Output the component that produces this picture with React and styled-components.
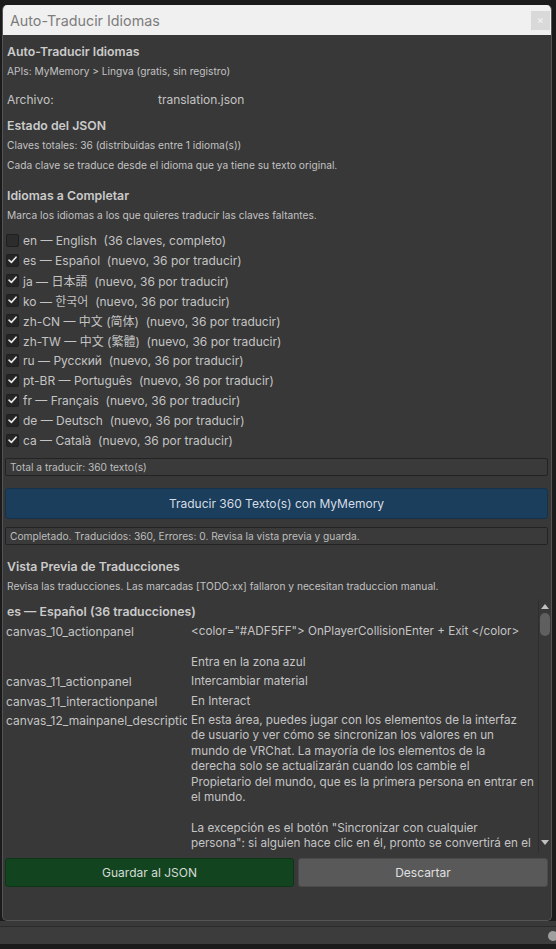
import React from 'react';
import styled, { createGlobalStyle } from 'styled-components';

const GlobalStyle = createGlobalStyle`
  html, body {
    margin: 0;
    padding: 0;
    background: #1b1b1b;
  }
  * {
    box-sizing: border-box;
  }
`;

const languages = [
  { code: 'en', name: 'English', note: '(36 claves, completo)', checked: false },
  { code: 'es', name: 'Español', note: '(nuevo, 36 por traducir)', checked: true },
  { code: 'ja', name: '日本語', note: '(nuevo, 36 por traducir)', checked: true },
  { code: 'ko', name: '한국어', note: '(nuevo, 36 por traducir)', checked: true },
  { code: 'zh-CN', name: '中文 (简体)', note: '(nuevo, 36 por traducir)', checked: true },
  { code: 'zh-TW', name: '中文 (繁體)', note: '(nuevo, 36 por traducir)', checked: true },
  { code: 'ru', name: 'Русский', note: '(nuevo, 36 por traducir)', checked: true },
  { code: 'pt-BR', name: 'Português', note: '(nuevo, 36 por traducir)', checked: true },
  { code: 'fr', name: 'Français', note: '(nuevo, 36 por traducir)', checked: true },
  { code: 'de', name: 'Deutsch', note: '(nuevo, 36 por traducir)', checked: true },
  { code: 'ca', name: 'Català', note: '(nuevo, 36 por traducir)', checked: true },
];

// empty string = blank line inside a translated value
const previewRows = [
  {
    key: 'canvas_10_actionpanel',
    lines: ['<color="#ADF5FF"> OnPlayerCollisionEnter + Exit </color>', '', 'Entra en la zona azul'],
  },
  { key: 'canvas_11_actionpanel', lines: ['Intercambiar material'] },
  { key: 'canvas_11_interactionpanel', lines: ['En Interact'] },
  {
    key: 'canvas_12_mainpanel_description',
    lines: [
      'En esta área, puedes jugar con los elementos de la interfaz',
      'de usuario y ver cómo se sincronizan los valores en un',
      'mundo de VRChat. La mayoría de los elementos de la',
      'derecha solo se actualizarán cuando los cambie el',
      'Propietario del mundo, que es la primera persona en entrar en',
      'el mundo.',
      '',
      'La excepción es el botón "Sincronizar con cualquier',
      'persona": si alguien hace clic en él, pronto se convertirá en el',
    ],
  },
];

const App = () => {
  return (
    <>
      <GlobalStyle />
      <Screen>
        <Window>
          <TitleBar>
            <TitleText>Auto-Traducir Idiomas</TitleText>
            <CloseButton>×</CloseButton>
          </TitleBar>

          <Content>
            <Heading>Auto-Traducir Idiomas</Heading>
            <SmallText>APIs: MyMemory &gt; Lingva (gratis, sin registro)</SmallText>

            <FieldRow>
              <FieldLabel>Archivo:</FieldLabel>
              <FieldValue>translation.json</FieldValue>
            </FieldRow>

            <Heading>Estado del JSON</Heading>
            <SmallText>Claves totales: 36 (distribuidas entre 1 idioma(s))</SmallText>
            <SmallText>
              Cada clave se traduce desde el idioma que ya tiene su texto original.
            </SmallText>

            <Heading $top={11}>Idiomas a Completar</Heading>
            <SmallText>Marca los idiomas a los que quieres traducir las claves faltantes.</SmallText>

            <LanguageList>
              {languages.map((lang) => (
                <LanguageRow key={lang.code}>
                  <Checkbox $checked={lang.checked}>
                    {lang.checked && (
                      <svg width='9' height='8' viewBox='0 0 9 8'>
                        <path
                          d='M1 4.2 L3.4 6.4 L8 1.2'
                          fill='none'
                          stroke='#e8e8e8'
                          strokeWidth='1.6'
                          strokeLinecap='round'
                          strokeLinejoin='round'
                        />
                      </svg>
                    )}
                  </Checkbox>
                  <LanguageLabel>
                    {lang.code} — {lang.name}
                    {'  '}
                    {lang.note}
                  </LanguageLabel>
                </LanguageRow>
              ))}
            </LanguageList>

            <InfoBox $top={8}>Total a traducir: 360 texto(s)</InfoBox>

            <WideButton>Traducir 360 Texto(s) con MyMemory</WideButton>

            <InfoBox $top={8}>
              Completado. Traducidos: 360, Errores: 0. Revisa la vista previa y guarda.
            </InfoBox>

            <Heading $top={12}>Vista Previa de Traducciones</Heading>
            <SmallText>
              Revisa las traducciones. Las marcadas [TODO:xx] fallaron y necesitan traduccion manual.
            </SmallText>

            <ScrollArea>
              <ScrollContent>
                <GroupTitle>es — Español (36 traducciones)</GroupTitle>
                {previewRows.map((row) => (
                  <PreviewRow key={row.key}>
                    <KeyCell>{row.key}</KeyCell>
                    <ValueCell>
                      {row.lines.map((line, i) => (
                        <ValueLine key={i}>{line || '\u00a0'}</ValueLine>
                      ))}
                    </ValueCell>
                  </PreviewRow>
                ))}
              </ScrollContent>
              <Scrollbar>
                <ArrowUp />
                <Track>
                  <Thumb />
                </Track>
                <ArrowDown />
              </Scrollbar>
            </ScrollArea>

            <ButtonRow>
              <ActionButton $variant='green' $basis='289px'>
                Guardar al JSON
              </ActionButton>
              <ActionButton $variant='grey'>Descartar</ActionButton>
            </ButtonRow>
          </Content>
        </Window>

        <Gap />
        <StatusBar>
          <StatusDot />
        </StatusBar>
      </Screen>
    </>
  );
};

const Screen = styled.div`
  width: 556px;
  height: 949px;
  display: flex;
  flex-direction: column;
  background: #1b1b1b;
  font-family: Inter, 'Noto Sans', 'Noto Sans CJK JP', sans-serif;
  color: #c4c4c4;
  overflow: hidden;
`;

const Window = styled.div`
  margin: 5px 4px 0 2px;
  height: 916px;
  flex-shrink: 0;
  display: flex;
  flex-direction: column;
  background: #383838;
  border: 1px solid #545454;
  border-top: none;
  border-radius: 5px;
  overflow: hidden;
`;

const TitleBar = styled.div`
  height: 30px;
  flex-shrink: 0;
  display: flex;
  align-items: center;
  justify-content: space-between;
  padding: 0 1px 0 7px;
  background: #f0f0f0;
`;

const TitleText = styled.span`
  font-size: 14.3px;
  color: #7c7c7c;
`;

const CloseButton = styled.div`
  width: 19px;
  height: 19px;
  display: flex;
  align-items: center;
  justify-content: center;
  background: #d9d9d9;
  color: #f6f6f6;
  font-size: 11px;
`;

const Content = styled.div`
  flex: 1;
  display: flex;
  flex-direction: column;
  padding: 7px 3px 0 3px;
`;

const Heading = styled.div`
  margin-top: ${(p) => p.$top || 0}px;
  padding-left: 1px;
  height: 19px;
  line-height: 19px;
  font-size: 12.3px;
  font-weight: 600;
  color: #cbcbcb;
`;

const SmallText = styled.div`
  padding-left: 1px;
  height: 20px;
  line-height: 20px;
  font-size: 10.2px;
  color: #c2c2c2;
  white-space: nowrap;
`;

const FieldRow = styled.div`
  display: flex;
  align-items: center;
  height: 20px;
  margin: 8px 0 7px 0;
  padding-left: 1px;
  font-size: 12px;
  color: #c4c4c4;
`;

const FieldLabel = styled.span`
  width: 151px;
`;

const FieldValue = styled.span``;

const LanguageList = styled.div`
  display: flex;
  flex-direction: column;
  margin-top: 5px;
`;

const LanguageRow = styled.div`
  display: flex;
  align-items: center;
  height: 20px;
`;

const Checkbox = styled.div`
  width: 13px;
  height: 13px;
  margin-right: 4px;
  display: flex;
  align-items: center;
  justify-content: center;
  background: ${(p) => (p.$checked ? '#252525' : '#2c2c2c')};
  border: 1px solid #1f1f1f;
  border-radius: 2px;
`;

const LanguageLabel = styled.span`
  font-size: 12px;
  white-space: pre;
  color: #c4c4c4;
`;

const InfoBox = styled.div`
  margin-top: ${(p) => p.$top || 0}px;
  margin-left: -1px;
  height: 18px;
  line-height: 16px;
  padding: 0 4px;
  font-size: 10.2px;
  color: #bdbdbd;
  background: #3a3a3a;
  border: 1px solid #232323;
  border-radius: 2px;
  white-space: nowrap;
`;

const buttonColours = {
  blue: { bg: '#1b3e5c', border: '#16324b', color: '#d6dde4' },
  green: { bg: '#134420', border: '#0f3519', color: '#d3dcd5' },
  grey: { bg: '#595959', border: '#4a4a4a', color: '#e0e0e0' },
};

const WideButton = styled.div`
  margin: 12px 0 0 -1px;
  height: 31px;
  display: flex;
  align-items: center;
  justify-content: center;
  font-size: 12px;
  color: ${buttonColours.blue.color};
  background: ${buttonColours.blue.bg};
  border: 1px solid ${buttonColours.blue.border};
  border-radius: 3px;
`;

const ActionButton = styled.div`
  flex: ${(p) => (p.$basis ? `0 0 ${p.$basis}` : '1')};
  height: 29px;
  display: flex;
  align-items: center;
  justify-content: center;
  font-size: 12px;
  color: ${(p) => buttonColours[p.$variant].color};
  background: ${(p) => buttonColours[p.$variant].bg};
  border: 1px solid ${(p) => buttonColours[p.$variant].border};
  border-radius: 3px;
`;

const ScrollArea = styled.div`
  margin: 3px -3px 0 0;
  height: 254px;
  flex-shrink: 0;
  display: flex;
  overflow: hidden;
`;

const ScrollContent = styled.div`
  flex: 1;
  overflow: hidden;
  padding-top: 3px;
`;

const GroupTitle = styled.div`
  height: 22px;
  line-height: 20px;
  padding-left: 1px;
  font-size: 12.3px;
  font-weight: 600;
  color: #cbcbcb;
`;

const PreviewRow = styled.div`
  display: flex;
  margin-bottom: 4px;
`;

const KeyCell = styled.div`
  width: 181px;
  margin-right: 4px;
  flex-shrink: 0;
  overflow: hidden;
  white-space: nowrap;
  font-size: 12px;
  line-height: 15.4px;
  color: #c4c4c4;
`;

const ValueCell = styled.div`
  flex: 1;
  display: flex;
  flex-direction: column;
`;

const ValueLine = styled.div`
  font-size: 11.7px;
  line-height: 15.4px;
  white-space: nowrap;
  color: #c4c4c4;
`;

const Scrollbar = styled.div`
  width: 13px;
  flex-shrink: 0;
  display: flex;
  flex-direction: column;
  align-items: center;
  border-left: 1px solid #2e2e2e;
  padding: 5px 0 8px;
`;

const ArrowUp = styled.div`
  width: 0;
  height: 0;
  border-left: 4px solid transparent;
  border-right: 4px solid transparent;
  border-bottom: 5px solid #c0c0c0;
`;

const ArrowDown = styled.div`
  width: 0;
  height: 0;
  border-left: 4px solid transparent;
  border-right: 4px solid transparent;
  border-top: 5px solid #c0c0c0;
`;

const Track = styled.div`
  flex: 1;
  width: 100%;
  padding: 4px 1px;
`;

const Thumb = styled.div`
  width: 10px;
  margin: 0 auto;
  height: 23px;
  border-radius: 5px;
  background: #5f5f5f;
`;

const ButtonRow = styled.div`
  display: flex;
  gap: 4px;
  margin: 5px 0 0 -1px;
`;

const Gap = styled.div`
  height: 6px;
  flex-shrink: 0;
  background: #393939;
  border-bottom: 1px solid #2a2a2a;
`;

const StatusBar = styled.div`
  height: 17px;
  flex-shrink: 0;
  display: flex;
  align-items: center;
  justify-content: flex-end;
  background: #3c3c3c;
`;

const StatusDot = styled.div`
  width: 10px;
  height: 10px;
  margin-right: -2px;
  border-radius: 50%;
  background: #a0a0a0;
`;

export default App;
